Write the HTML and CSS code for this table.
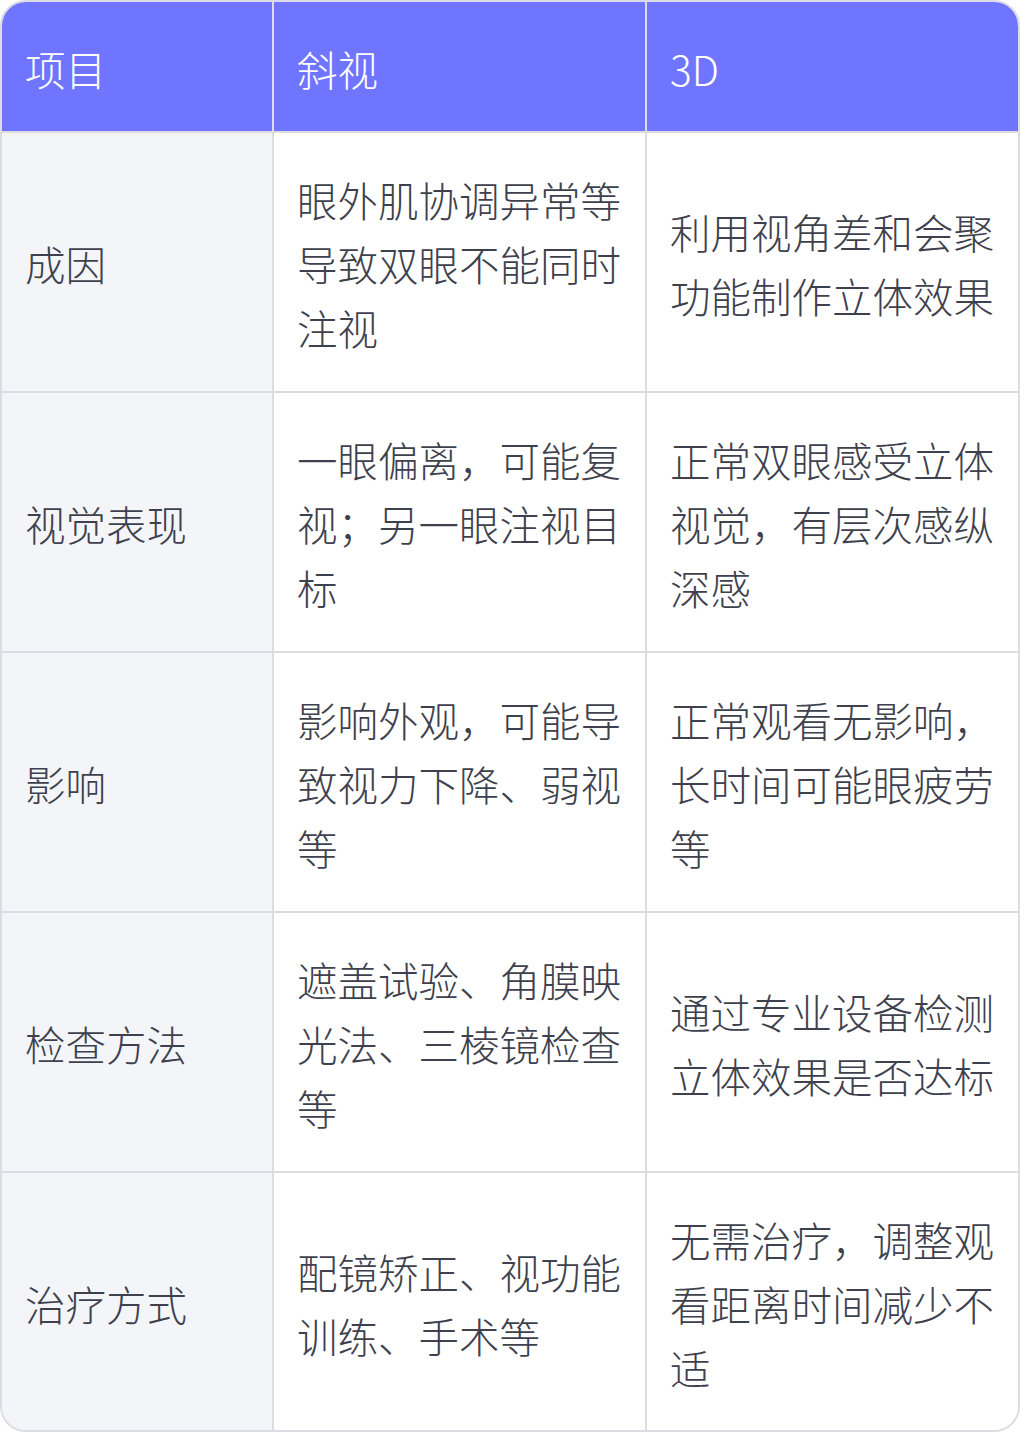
FILE: index.html
```html
<!DOCTYPE html>
<html lang="zh-CN">
<head>
    <meta charset="UTF-8">
    <meta name="viewport" content="width=device-width, initial-scale=1.0">
    <title>斜视与3D对比</title>
    <link rel="stylesheet" href="styles.css">
</head>
<body>
    <div class="wrap">
        <table class="compare">
            <thead>
                <tr>
                    <th class="col-item">项目</th>
                    <th class="col-a">斜视</th>
                    <th class="col-b">3D</th>
                </tr>
            </thead>
            <tbody>
                <tr>
                    <td class="label">成因</td>
                    <td>眼外肌协调异常等导致双眼不能同时注视</td>
                    <td>利用视角差和会聚功能制作立体效果</td>
                </tr>
                <tr>
                    <td class="label">视觉表现</td>
                    <td>一眼偏离，可能复视；另一眼注视目标</td>
                    <td>正常双眼感受立体视觉，有层次感纵深感</td>
                </tr>
                <tr>
                    <td class="label">影响</td>
                    <td>影响外观，可能导致视力下降、弱视等</td>
                    <td>正常观看无影响，长时间可能眼疲劳等</td>
                </tr>
                <tr>
                    <td class="label">检查方法</td>
                    <td>遮盖试验、角膜映光法、三棱镜检查等</td>
                    <td>通过专业设备检测立体效果是否达标</td>
                </tr>
                <tr>
                    <td class="label">治疗方式</td>
                    <td>配镜矫正、视功能训练、手术等</td>
                    <td>无需治疗，调整观看距离时间减少不适</td>
                </tr>
            </tbody>
        </table>
    </div>
</body>
</html>
```

FILE: styles.css
```css
body {
    margin: 0;
    background-color: #ffffff;
    font-family: "Noto Sans CJK SC", "Noto Sans", sans-serif;
}
.wrap {
    width: 1020px;
    height: 1432px;
    box-sizing: border-box;
    border: 2px solid #dcdde2;
    border-radius: 26px;
    overflow: hidden;
}
.compare {
    width: 1016px;
    border-collapse: separate;
    border-spacing: 0;
    table-layout: fixed;
}
.compare th,
.compare td {
    font-size: 40.5px;
    font-weight: 300;
    line-height: 64px;
    text-align: left;
    vertical-align: middle;
    padding: 0 22px 0 23px;
    border-right: 2px solid #dcdde2;
    border-bottom: 2px solid #dcdde2;
    word-break: break-all;
}
.compare th:last-child,
.compare td:last-child {
    border-right: none;
}
.compare tbody tr:last-child td {
    border-bottom: none;
}
.compare th {
    height: 131px;
    box-sizing: border-box;
    padding-top: 4px;
    background-color: #7075ff;
    color: #ffffff;
}
.col-item {
    width: 272px;
}
.col-a {
    width: 373px;
}
.compare td {
    height: 254px;
    padding-top: 4px;
    color: #3e414d;
    background-color: #ffffff;
}
.compare td.label {
    background-color: #f4f5f9;
}
```
